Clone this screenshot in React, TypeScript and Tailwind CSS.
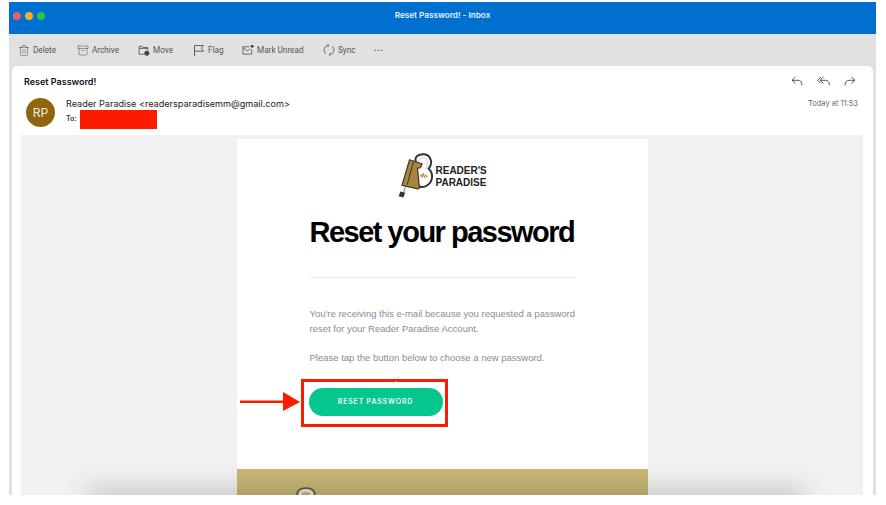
import React, { FC, ReactNode } from "react";
import { Archive, Trash2 } from "lucide-react";

const ToolItem: FC<{ icon: ReactNode; label: string; className: string }> = ({ icon, label, className }) => (
  <div className={`flex items-center gap-[3px] text-[#555] ${className}`}>
    <span className="flex w-[12px] justify-center">{icon}</span>
    <span>{label}</span>
  </div>
);

const MoveIcon = () => (
  <svg width="13" height="13" viewBox="0 0 13 13" fill="none" stroke="#444" strokeWidth="0.8">
    <path d="M7 10.500H1.200V2h3.200l1 1.200h5.200V6" />
    <path d="M1.200 4.200h9.400" />
    <circle cx="9.600" cy="9.400" r="2.400" fill="#444" />
  </svg>
);

const FlagIcon = () => (
  <svg width="12" height="13" viewBox="0 0 12 13" fill="none" stroke="#444" strokeWidth="0.8">
    <path d="M1.500 12V1.500h9L8.400 4.200l2.100 3h-9" />
  </svg>
);

const MailIcon = () => (
  <svg width="13" height="12" viewBox="0 0 13 12" fill="none" stroke="#444" strokeWidth="0.8">
    <path d="M8 2.500H1v8h9.500V5.500" />
    <path d="M1 3.500l4.800 3.400L9 4.800" />
    <circle cx="11" cy="2" r="1.500" fill="#333" stroke="none" />
  </svg>
);

const SyncIcon = () => (
  <svg width="13" height="14" viewBox="0 0 13 14" fill="none" stroke="#444" strokeWidth="0.8">
    <path d="M3.200 11.200A5 5 0 0 1 6 2.100" />
    <path d="M9.800 2.800A5 5 0 0 1 7 11.900" />
    <path d="M5 .8l1.500 1.300L5 3.500" />
    <path d="M8 10.500l-1.500 1.400L8 13.200" />
  </svg>
);

const ReplyIcon = () => (
  <svg width="12" height="11" viewBox="0 0 12 11" fill="none" stroke="#444" strokeWidth="0.9">
    <path d="M4.500 1L1 4.300l3.500 3.200" />
    <path d="M1 4.300h6c2.500 0 3.800 1.700 4 5" />
  </svg>
);

const ReplyAllIcon = () => (
  <svg width="13" height="11" viewBox="0 0 13 11" fill="none" stroke="#444" strokeWidth="0.9">
    <path d="M4 1L.8 4.300 4 7.500" />
    <path d="M6.500 1L3.200 4.300l3.300 3.200" />
    <path d="M3.200 4.300h5.300c2.500 0 3.800 1.700 4 5" />
  </svg>
);

const ForwardIcon = () => (
  <svg width="12" height="11" viewBox="0 0 12 11" fill="none" stroke="#444" strokeWidth="0.9">
    <path d="M7.500 1L11 4.300 7.500 7.500" />
    <path d="M11 4.300H5c-2.500 0-3.800 1.700-4 5" />
  </svg>
);

const LogoMark = () => (
  <svg width="38" height="45" viewBox="50 25 115 135" fill="none" className="shrink-0">
    <path d="M108 52c-8-16 8-25 24-24 20 2 28 26 14 44 14 12 14 38-4 50-10 7-20 7-30 1" stroke="#333" strokeWidth="6" />
    <path d="M116 52c-2-8 6-14 15-13 12 2 17 20 4 34" stroke="#ccc" strokeWidth="3" />
    <path d="M88 45l38 12-5 12-9 1 6 60-5 3-48-11z" fill="#a9843c" stroke="#333" strokeWidth="3.500" />
    <path d="M100 50l-19 70" stroke="#333" strokeWidth="3" />
    <path d="M120 96l4-7 2 9 4-12 3 14 4-10 2 6 5-2" stroke="#a9843c" strokeWidth="3" />
    <path d="M76 126l-6 18" stroke="#777" strokeWidth="3" />
    <path d="M60 141l15 4-6 14-14-4z" fill="#333" />
  </svg>
);

export default function App() {
  return (
    <div className="relative h-[505px] w-[886px] overflow-hidden bg-white font-['Inter',sans-serif]">
      <svg className="absolute h-0 w-0">
        <filter id="rough">
          <feTurbulence type="fractalNoise" baseFrequency="0.2" numOctaves="2" seed="4" />
          <feDisplacementMap in="SourceGraphic" scale="1.500" />
        </filter>
      </svg>

      <div className="ml-[9px] mt-[2px] flex h-[493px] w-[867px] flex-col overflow-hidden bg-[#e1e1e1]">
        {/* title bar */}
        <div className="relative flex h-[32px] shrink-0 items-center justify-center bg-[#0070d0] pb-[5px]">
          <div className="absolute left-[4px] top-[10px] flex gap-[4px]">
            <span className="h-[8px] w-[8px] rounded-full bg-[#f0605a]" />
            <span className="h-[8px] w-[8px] rounded-full bg-[#f4b02f]" />
            <span className="h-[8px] w-[8px] rounded-full bg-[#2fc24a]" />
          </div>
          <span className="text-[8.200px] font-semibold text-[#e6f1fb]">Reset Password! - Inbox</span>
        </div>

        {/* toolbar */}
        <div className="flex h-[32px] shrink-0 items-center pl-[9px] font-['Roboto',sans-serif] text-[8.200px]">
          <ToolItem className="w-[59px]" icon={<Trash2 size={13} strokeWidth={1} color="#444" />} label="Delete" />
          <ToolItem className="w-[61px]" icon={<Archive size={13} strokeWidth={1} color="#444" />} label="Archive" />
          <ToolItem className="w-[55px]" icon={<MoveIcon />} label="Move" />
          <ToolItem className="w-[49px]" icon={<FlagIcon />} label="Flag" />
          <ToolItem className="w-[81px]" icon={<MailIcon />} label="Mark Unread" />
          <ToolItem className="w-[51px]" icon={<SyncIcon />} label="Sync" />
          <span className="mb-[3px] text-[9px] font-bold tracking-[0.5px] text-[#555]">...</span>
        </div>

        {/* message */}
        <div className="mx-[3px] flex min-h-0 flex-1 flex-col rounded-t-[5px] bg-white">
          <div className="relative h-[69px] shrink-0 px-[12px] pt-[10px]">
            <div className="text-[9px] font-semibold leading-[12px] text-[#111]">Reset Password!</div>
            <div className="mt-[10px] flex">
              <div className="ml-[2px] flex h-[29px] w-[29px] items-center justify-center rounded-full bg-[#8f660e] text-[12px] text-[#f5eddc]">RP</div>
              <div className="ml-[11px]">
                <div className="text-[9.100px] leading-[12px] text-[#222]">Reader Paradise &lt;readersparadisemm@gmail.com&gt;</div>
                <div className="flex items-center gap-[3px]">
                  <span className="text-[7px] font-semibold text-[#333]">To:</span>
                  <span className="h-[19px] w-[77px] bg-[#fb1f00] [filter:url(#rough)]" />
                </div>
              </div>
            </div>
            <div className="absolute right-[17px] top-[10px] flex items-center gap-[14px]">
              <ReplyIcon />
              <ReplyAllIcon />
              <ForwardIcon />
            </div>
            <div className="absolute right-[15px] top-[32px] text-[7.500px] text-[#6a6a6a]">Today at 11:53</div>
          </div>

          {/* email body */}
          <div className="relative ml-[9px] mr-[10px] flex min-h-0 flex-1 justify-center overflow-hidden bg-[#f1f1f1] pt-[4px]">
            <div className="flex w-[411px] flex-col bg-white">
              <div className="flex h-[330px] shrink-0 flex-col pl-[73px] pr-[72px]">
                <div className="ml-[87px] mt-[14px] flex h-[45px] items-center gap-[1px]">
                  <LogoMark />
                  <div className="mt-[2px] font-['Liberation_Sans',sans-serif] text-[10px] font-bold leading-[12px] text-[#222]">
                    READER'S<br />PARADISE
                  </div>
                </div>
                <h1 className="mt-[16px] whitespace-nowrap font-['Liberation_Sans',sans-serif] text-[29px] font-bold leading-[36px] tracking-[-1.500px] text-black">
                  Reset your password
                </h1>
                <div className="mt-[27px] h-px w-[266px] bg-[#e6e6e6]" />
                <p className="mt-[29px] font-['Liberation_Sans',sans-serif] text-[9.500px] leading-[14.500px] text-[#878b99]">
                  You're receiving this e-mail because you requested a password reset for your Reader Paradise Account.
                </p>
                <p className="mt-[14.500px] font-['Liberation_Sans',sans-serif] text-[9.500px] leading-[14.500px] text-[#878b99]">
                  Please tap the button below to choose a new password.
                </p>
                <div className="-ml-[9px] mt-[13.500px] w-[147px] border-[3px] border-[#fb1f00] pb-[8px] pl-[5px] pr-[2px] pt-[6px] [filter:url(#rough)]">
                  <div className="h-[28px]" />
                </div>
                <div className="-ml-[1px] -mt-[39px] flex h-[28px] w-[134px] items-center justify-center rounded-full bg-[#05c68e] pt-[1px] text-[7px] font-semibold tracking-[0.8px] text-[#e8fbf5]">
                  RESET PASSWORD
                </div>
              </div>
              <div className="flex flex-1 bg-[#c9b776] pl-[58px] pt-[18px]">
                <svg width="22" height="10" viewBox="0 0 22 10" fill="none" className="shrink-0">
                  <path d="M2 10V8C2 3 6 1 11 1s9 2 9 7v2" stroke="#555" strokeWidth="1.500" />
                  <path d="M5 10V8c0-3 3-4.500 6-4.500S17 5 17 8v2" stroke="#e8e8e8" strokeWidth="2.500" />
                </svg>
              </div>
            </div>
            <div className="absolute bottom-[-14px] left-[65px] h-[20px] w-[720px] rounded-full bg-black/20 blur-[12px]" />
          </div>
        </div>
      </div>

      {/* annotation arrow */}
      <svg className="absolute left-[239px] top-[390px] [filter:url(#rough)]" width="64" height="24" viewBox="0 0 64 24" fill="#fb1f00">
        <rect x="1" y="10.500" width="44" height="2.500" />
        <path d="M44 2l17 10-17 9z" />
      </svg>
    </div>
  );
}
